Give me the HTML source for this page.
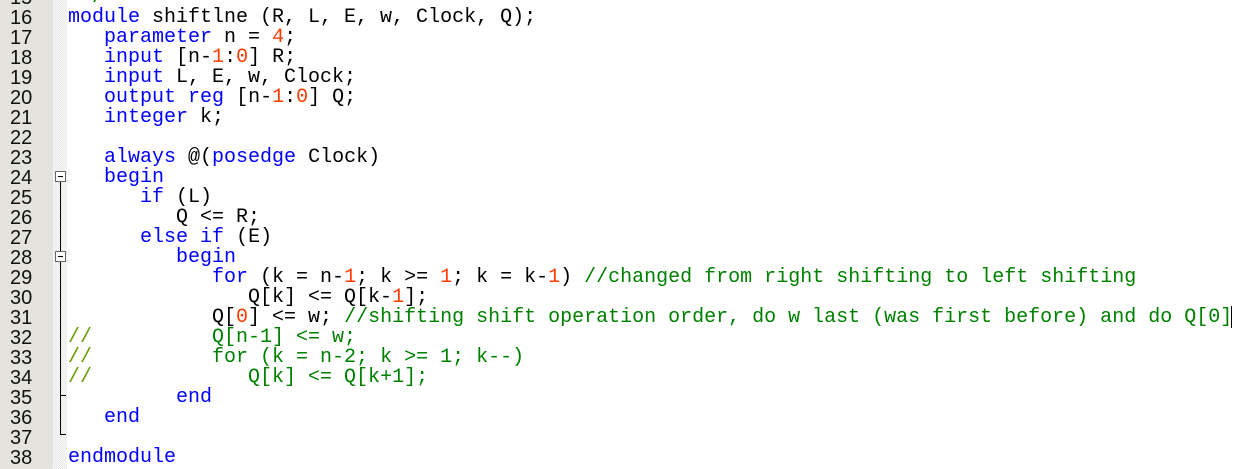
<!DOCTYPE html>
<html><head><style>
body{margin:0;width:1243px;height:469px;overflow:hidden;background:#fff;position:relative;font-family:"Liberation Mono",monospace;}
.g{position:absolute;left:0;top:0;width:53px;height:469px;background:#e4e3dd;}
.h{position:absolute;left:53px;top:0;width:14px;height:469px;background-color:#f4f4f4;background-image:repeating-conic-gradient(#e6e6e6 0 25%,#fbfbfb 0 50%);background-size:2px 2px;}
.n{position:absolute;left:10px;font-size:20px;color:#111;line-height:20px;font-family:"Liberation Sans",sans-serif;top:-12px;}
pre{margin:0;position:absolute;left:68px;top:-12px;font-size:20px;line-height:20px;color:#000;font-family:"Liberation Mono",monospace;}
.k{color:#0000ff}.r{color:#ff3c00}.c{color:#008000}.o{color:#6a9a00}
.vl{position:absolute;left:60px;width:1px;background:#000;}
.box{position:absolute;left:55px;width:11px;height:11px;border:1px solid #666;background:#fff;box-sizing:border-box;}
.box:after{content:"";position:absolute;left:2px;top:4px;width:5px;height:1px;background:#000;}
.t{position:absolute;left:60px;width:6px;height:1px;background:#000;}
.cur{position:absolute;left:1231px;top:306px;width:1px;height:22px;background:#000;}
</style></head><body>
<div class="g"></div><div class="h"></div>
<div class="n">15<br>16<br>17<br>18<br>19<br>20<br>21<br>22<br>23<br>24<br>25<br>26<br>27<br>28<br>29<br>30<br>31<br>32<br>33<br>34<br>35<br>36<br>37<br>38</div>
<div class="box" style="top:171px"></div>
<div class="vl" style="top:182px;height:253px"></div>
<div class="t" style="top:434px"></div>
<div class="box" style="top:251px"></div>
<div class="t" style="top:395px"></div>
<pre>  <span class="c">/</span>
<span class="k">module</span> shiftlne (R, L, E, w, Clock, Q);
   <span class="k">parameter</span> n = <span class="r">4</span>;
   <span class="k">input</span> [n-<span class="r">1</span>:<span class="r">0</span>] R;
   <span class="k">input</span> L, E, w, Clock;
   <span class="k">output</span> <span class="k">reg</span> [n-<span class="r">1</span>:<span class="r">0</span>] Q;
   <span class="k">integer</span> k;

   <span class="k">always</span> @(<span class="k">posedge</span> Clock)
   <span class="k">begin</span>
      <span class="k">if</span> (L)
         Q &lt;= R;
      <span class="k">else</span> <span class="k">if</span> (E)
         <span class="k">begin</span>
            <span class="k">for</span> (k = n-<span class="r">1</span>; k &gt;= <span class="r">1</span>; k = k-<span class="r">1</span>) <span class="c">//changed from right shifting to left shifting</span>
               Q[k] &lt;= Q[k-<span class="r">1</span>];
            Q[<span class="r">0</span>] &lt;= w; <span class="c">//shifting shift operation order, do w last (was first before) and do Q[0]</span>
<span class="o">//</span><span class="c">          Q[n-1] &lt;= w;</span>
<span class="o">//</span><span class="c">          for (k = n-2; k &gt;= 1; k--)</span>
<span class="o">//</span><span class="c">             Q[k] &lt;= Q[k+1];</span>
         <span class="k">end</span>
   <span class="k">end</span>

<span class="k">endmodule</span></pre>
<div class="cur"></div>
</body></html>
